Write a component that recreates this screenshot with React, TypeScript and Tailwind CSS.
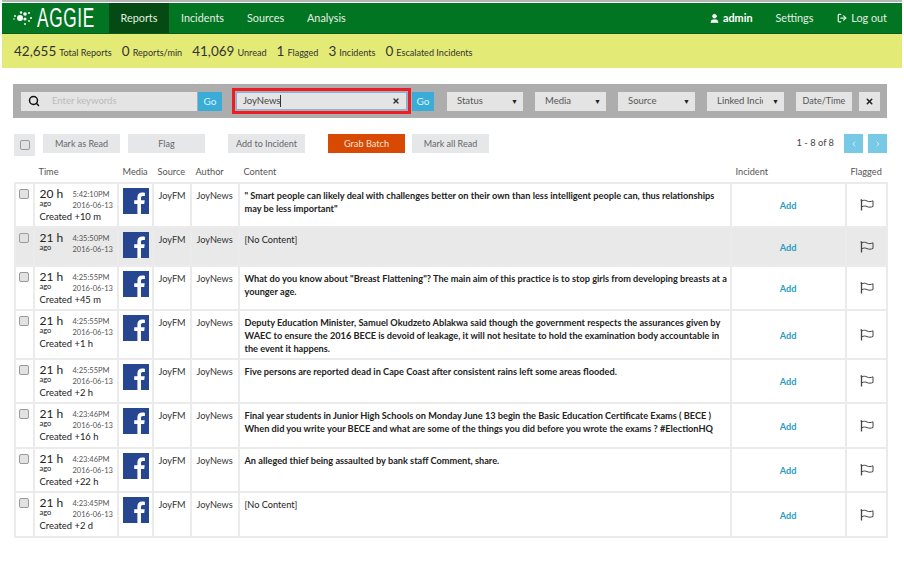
import { ChevronLeft, ChevronRight, X, Search, User, LogOut } from "lucide-react"

const rows = [
  { ago: "20 h", time: "5:42:10PM", created: "Created +10 m", h: "h-[44px]", text: "\" Smart people can likely deal with challenges better on their own than less intelligent people can, thus relationships may be less important\"" },
  { ago: "21 h", time: "4:35:50PM", created: "", h: "h-[39px]", text: "", read: true },
  { ago: "21 h", time: "4:25:55PM", created: "Created +45 m", h: "h-[44px]", text: "What do you know about \"Breast Flattening\"? The main aim of this practice is to stop girls from developing breasts at a younger age." },
  { ago: "21 h", time: "4:25:55PM", created: "Created +1 h", h: "h-[49px]", text: "Deputy Education Minister, Samuel Okudzeto Ablakwa said though the government respects the assurances given by WAEC to ensure the 2016 BECE is devoid of leakage, it will not hesitate to hold the examination body accountable in the event it happens." },
  { ago: "21 h", time: "4:25:55PM", created: "Created +2 h", h: "h-[44px]", text: "Five persons are reported dead in Cape Coast after consistent rains left some areas flooded." },
  { ago: "21 h", time: "4:23:46PM", created: "Created +16 h", h: "h-[45px]", text: "Final year students in Junior High Schools on Monday June 13 begin the Basic Education Certificate Exams ( BECE ) When did you write your BECE and what are some of the things you did before you wrote the exams ? #ElectionHQ" },
  { ago: "21 h", time: "4:23:46PM", created: "Created +22 h", h: "h-[44px]", text: "An alleged thief being assaulted by bank staff Comment, share." },
  { ago: "21 h", time: "4:23:45PM", created: "Created +2 d", h: "h-[45px]", text: "" },
]

function Logo() {
  return (
    <svg width="21" height="16" viewBox="0 0 21 16" fill="white">
      <circle cx="7" cy="8" r="3" />
      <circle cx="12" cy="4" r="1.8" />
      <circle cx="12" cy="9" r="1.6" />
      <circle cx="8" cy="2.5" r="1.2" />
      <circle cx="2" cy="6" r="0.9" />
      <circle cx="1" cy="9" r="0.8" />
      <circle cx="16" cy="3" r="1" />
      <circle cx="18" cy="8" r="1" />
      <circle cx="16" cy="11" r="0.9" />
      <circle cx="12" cy="14" r="0.9" />
    </svg>
  )
}

function FacebookIcon() {
  return (
    <svg width="26" height="26" viewBox="0 0 26 26">
      <rect width="26" height="26" fill="#26468f" />
      <path d="M18 26v-10h3.2l.5-3.8H18V10c0-1.1.4-1.9 2-1.9h1.9V4.7c-.4 0-1.500-.2-2.800-.2-2.800 0-4.700 1.700-4.700 4.800v2.900h-3.200V16h3.200v10z" fill="white" />
    </svg>
  )
}

function FlagIcon() {
  return (
    <svg width="14" height="12" viewBox="0 0 14 12" fill="none" stroke="#444" strokeWidth="1">
      <path d="M1.500 0.500V11.500" strokeWidth="1.300" />
      <path d="M0.500 1H2" />
      <path d="M1.500 2C4 0.800 5.500 1.200 7 2C9 3 11 2.700 13 1.800V7.500C11 8.300 9 8.500 7 7.600C5.500 6.900 4 6.700 1.500 7.800" />
    </svg>
  )
}

function Check() {
  return <input type="checkbox" readOnly className="appearance-none block w-[10px] h-[10px] rounded-[2px] border border-[#9a9a9a] bg-[#e2e2e2]" />
}

function Filter({ label, w, clip }: { label: string; w: string; clip?: boolean }) {
  return (
    <div className={`${w} h-[19px] pt-[1px] bg-[#e4e4e4] flex items-center justify-between pl-[10px] pr-[5px] text-[9.500px] text-[#555]`}>
      <span className={clip ? "w-[46px] overflow-hidden whitespace-nowrap" : ""}>{label}</span>
      <span className="text-[7px] text-[#222]">▼</span>
    </div>
  )
}

function ActionButton({ label, className }: { label: string; className: string }) {
  return (
    <button className={`${className} w-[77px] h-[19px] bg-[#e6e7e9] text-[9px] text-[#666]`}>{label}</button>
  )
}

export default function App() {
  return (
    <div className="w-[904px] h-[570px] overflow-hidden bg-white text-[#333]" style={{ fontFamily: "Lato, 'Open Sans', sans-serif" }}>
      <div className="h-[3px] border-t-2 border-[#b5b5b5] ml-[2px] mr-[2px]"></div>

      {/* Nav */}
      <nav className="ml-[2px] mr-[2px] h-[31px] bg-[#027522] flex items-center text-[10.800px] text-[#e4efe4] border-b border-[#0a5c1c]">
        <div className="w-[107px] pl-[11px] flex items-center gap-[3px]">
          <Logo />
          <span className="block w-[56px] origin-left scale-x-[0.64] text-white text-[27px] leading-none tracking-[1px] whitespace-nowrap" style={{ fontFamily: "'Liberation Sans', sans-serif" }}>AGGIE</span>
        </div>
        <div className="w-[60px] h-full bg-[#044a12] flex items-center justify-center">Reports</div>
        <div className="flex gap-[23px] ml-[12px]">
          <span>Incidents</span>
          <span>Sources</span>
          <span>Analysis</span>
        </div>
        <div className="ml-auto flex items-center pr-[15px]">
          <User size={11} fill="#fff" className="text-white mr-[3px]" />
          <span className="font-bold text-white">admin</span>
          <span className="ml-[23px]">Settings</span>
          <LogOut size={10} strokeWidth={3} className="ml-[24px] mr-[4px]" />
          <span>Log out</span>
        </div>
      </nav>

      {/* Stats */}
      <div className="ml-[2px] mr-[2px] h-[34px] bg-[#e4ea76] flex items-center pl-[12px] text-[#333] gap-[10px]">
        {[
          ["42,655", "Total Reports"],
          ["0", "Reports/min"],
          ["41,069", "Unread"],
          ["1", "Flagged"],
          ["3", "Incidents"],
          ["0", "Escalated Incidents"],
        ].map(([n, l]) => (
          <div key={l} className="flex items-baseline gap-[3px]">
            <span className="text-[13.500px]">{n}</span>
            <span className="text-[9.100px]">{l}</span>
          </div>
        ))}
      </div>

      {/* Filter bar */}
      <div className="mt-[16px] ml-[13px] w-[874px] h-[34px] bg-[#adadad] flex items-center pl-[8px]">
        <div className="w-[176px] h-[19px] bg-[#e4e4e4] flex items-center pl-[7px]">
          <Search size={12} strokeWidth={3} className="text-[#111]" />
          <span className="ml-[12px] text-[9.500px] text-[#bbb]">Enter keywords</span>
        </div>
        <button className="w-[24px] h-[19px] ml-[1px] bg-[#39acd8] text-[10px] text-[#dff3fa]">Go</button>
        <div className="ml-[10px] w-[179px] h-[26px] border-[3px] border-[#ee1c25] p-[1px] flex">
          <div className="flex-1 bg-[#e4e4e4] border border-[#7fb4dc] flex items-center justify-between pl-[6px] pr-[6px] text-[9.500px] text-[#444]">
            <span className="border-r border-[#333] leading-[12px]">JoyNews</span>
            <X size={8} strokeWidth={4} className="text-[#333]" />
          </div>
        </div>
        <button className="w-[22px] h-[19px] ml-[1px] bg-[#39acd8] text-[10px] text-[#dff3fa]">Go</button>
        <div className="ml-[13px]"><Filter label="Status" w="w-[76px]" /></div>
        <div className="ml-[12px]"><Filter label="Media" w="w-[71px]" /></div>
        <div className="ml-[12px]"><Filter label="Source" w="w-[77px]" /></div>
        <div className="ml-[12px]"><Filter label="Linked Incident" w="w-[77px]" clip /></div>
        <button className="ml-[12px] w-[56px] h-[19px] bg-[#e4e4e4] text-[9px] text-[#555]">Date/Time</button>
        <button className="ml-[7px] w-[21px] h-[19px] bg-[#e4e4e4] flex items-center justify-center">
          <X size={9} strokeWidth={4} className="text-[#222]" />
        </button>
      </div>

      {/* Toolbar */}
      <div className="mt-[16px] ml-[14px] w-[873px] h-[22px] flex items-start">
        <div className="w-[21px] h-[22px] bg-[#e6e7e9] flex items-center justify-center">
          <Check />
        </div>
        <ActionButton label="Mark as Read" className="ml-[8px]" />
        <ActionButton label="Flag" className="ml-[8px]" />
        <ActionButton label="Add to Incident" className="ml-[23px]" />
        <button className="ml-[23px] w-[77px] h-[19px] bg-[#d84a04] text-[9.200px] text-[#f7e3d6]">Grab Batch</button>
        <ActionButton label="Mark all Read" className="ml-[7px]" />
        <div className="ml-auto flex items-start">
          <span className="text-[9.300px] leading-[18px] text-[#444] mr-[10px]">1 - 8 of 8</span>
          <button className="w-[19px] h-[19px] bg-[#78c9e6] flex items-center justify-center text-white"><ChevronLeft size={8} /></button>
          <button className="w-[19px] h-[19px] ml-[5px] bg-[#78c9e6] flex items-center justify-center text-white"><ChevronRight size={8} /></button>
        </div>
      </div>

      {/* Reports table */}
      <table className="mt-[5px] ml-[13.500px] w-[874px] table-fixed border-collapse text-[9.200px]">
        <thead>
          <tr className="h-[22px] text-[#555] text-left">
            <th className="w-[19px] font-normal"></th>
            <th className="w-[84px] font-normal pl-[5px] pt-[1px]">Time</th>
            <th className="w-[35px] font-normal pl-[5px] pt-[1px]">Media</th>
            <th className="w-[38px] font-normal pl-[5px] pt-[1px]">Source</th>
            <th className="w-[48px] font-normal pl-[5px] pt-[1px]">Author</th>
            <th className="w-[492px] font-normal pl-[5px] pt-[1px]">Content</th>
            <th className="w-[115px] font-normal pl-[5px] pt-[1px]">Incident</th>
            <th className="font-normal pl-[5px] pt-[1px]">Flagged</th>
          </tr>
        </thead>
        <tbody>
          {rows.map((r, i) => {
            const cell = "border-2 border-[#ebebeb] align-top"
            return (
              <tr key={i} className={`${r.h} ${r.read ? "bg-[#e9e9e9]" : "bg-white"}`}>
                <td className={`${cell} pt-[5px]`}>
                  <div className="flex justify-center"><Check /></div>
                </td>
                <td className={`${cell} pl-[5px] pt-[3px]`}>
                  <div className="flex justify-between pr-[3px]">
                    <div className="text-[12px] leading-[13px] text-[#222]">
                      {r.ago}
                      <div className="text-[7.500px] leading-[8px]">ago</div>
                    </div>
                    <div className="w-[41px] pt-[2px] text-[7.500px] leading-[11px] text-[#555]">
                      {r.time}
                      <div>2016-06-13</div>
                    </div>
                  </div>
                  {r.created && <div className="text-[9.400px] leading-[12px] text-[#222] whitespace-nowrap">{r.created}</div>}
                </td>
                <td className={`${cell} pt-[4px] pl-[4px]`}><FacebookIcon /></td>
                <td className={`${cell} pl-[5px] pt-[5px]`}>JoyFM</td>
                <td className={`${cell} pl-[5px] pt-[5px]`}>JoyNews</td>
                <td className={`${cell} pl-[5px] pt-[5px] pr-[2px] leading-[13px] text-[#222] ${r.text ? "font-bold" : ""}`}>
                  {r.text || "[No Content]"}
                </td>
                <td className="border-2 border-[#ebebeb] align-middle pt-[2px] text-center font-bold text-[#2a9dbf]">Add</td>
                <td className="border-2 border-[#ebebeb] align-middle">
                  <div className="flex justify-center pl-[1px]"><FlagIcon /></div>
                </td>
              </tr>
            )
          })}
        </tbody>
      </table>
    </div>
  )
}
